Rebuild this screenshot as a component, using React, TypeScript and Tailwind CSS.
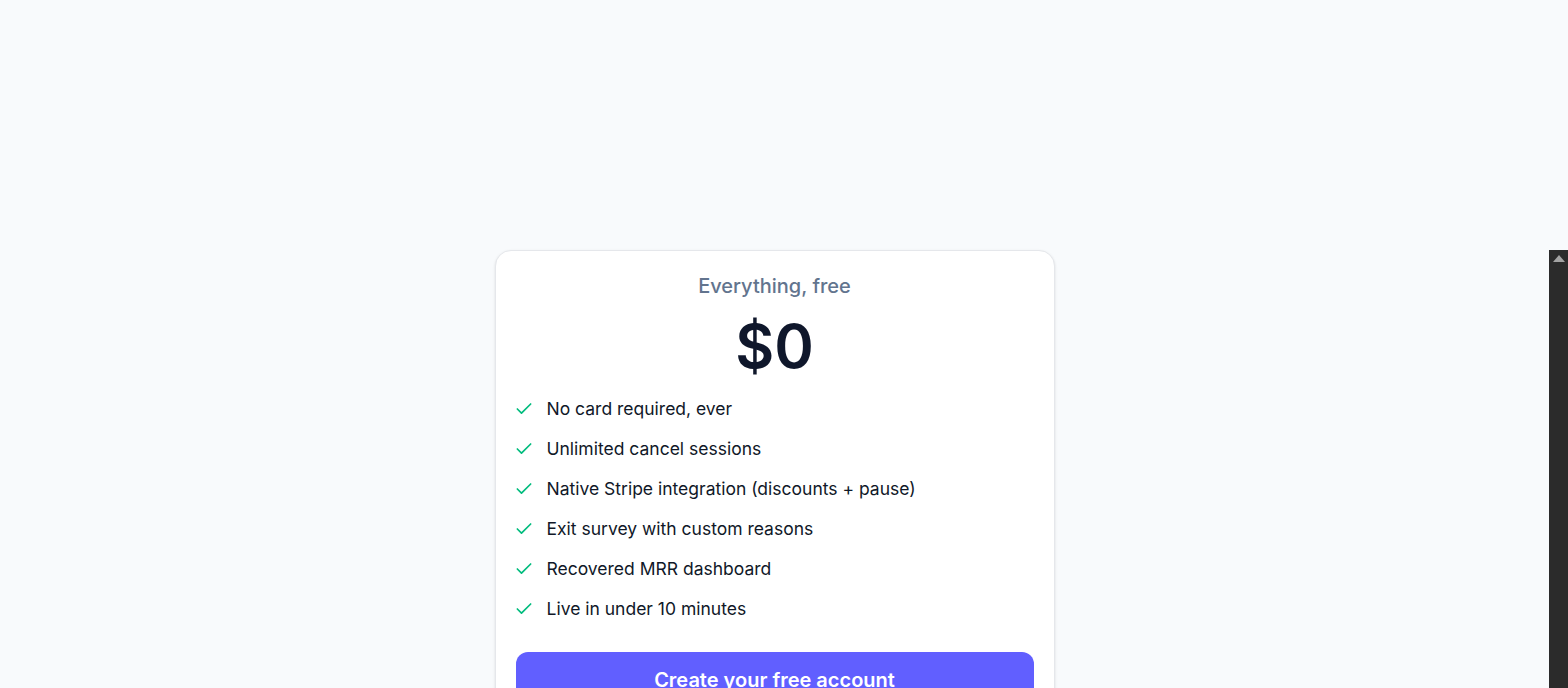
import React from 'react';
import { Check } from 'lucide-react';

const features = [
  'No card required, ever',
  'Unlimited cancel sessions',
  'Native Stripe integration (discounts + pause)',
  'Exit survey with custom reasons',
  'Recovered MRR dashboard',
  'Live in under 10 minutes',
];

const PricingCard: React.FC = () => {
  return (
    <div className="w-[560px] rounded-2xl border border-gray-200 bg-white px-5 pt-[21px] pb-6 shadow-sm">
      <p className="text-center text-[20px] font-medium leading-7 text-slate-500">Everything, free</p>
      <p className="mt-4 text-center text-[60px] font-semibold leading-none text-slate-900">$0</p>
      <ul className="-ml-0.5 mt-[21px] space-y-4">
        {features.map(item => (
          <li key={item} className="flex items-center gap-[13px] text-[17.5px] leading-6 text-gray-900">
            <Check className="h-5 w-5 shrink-0 text-emerald-500" strokeWidth={2} />
            <span>{item}</span>
          </li>
        ))}
      </ul>
      <button className="mt-[31px] h-14 w-full rounded-xl bg-indigo-500 text-xl font-semibold text-white">
        Create your free account
      </button>
    </div>
  );
};

const App: React.FC = () => {
  return (
    <div className="flex h-[688px] flex-col overflow-hidden bg-slate-50" style={{ fontFamily: 'Inter, "Noto Sans", sans-serif' }}>
      <div className="h-[250px] shrink-0" />
      <div className="flex flex-1">
        <div className="flex flex-1 justify-center">
          <PricingCard />
        </div>
        {/* fake scrollbar strip */}
        <div className="flex w-[19px] shrink-0 justify-center bg-[#2b2b2b] pt-[5px]">
          <div className="h-0 w-0 border-x-[6px] border-b-[7px] border-x-transparent border-b-[#a3a3a3]" />
        </div>
      </div>
    </div>
  );
};

export default App;
